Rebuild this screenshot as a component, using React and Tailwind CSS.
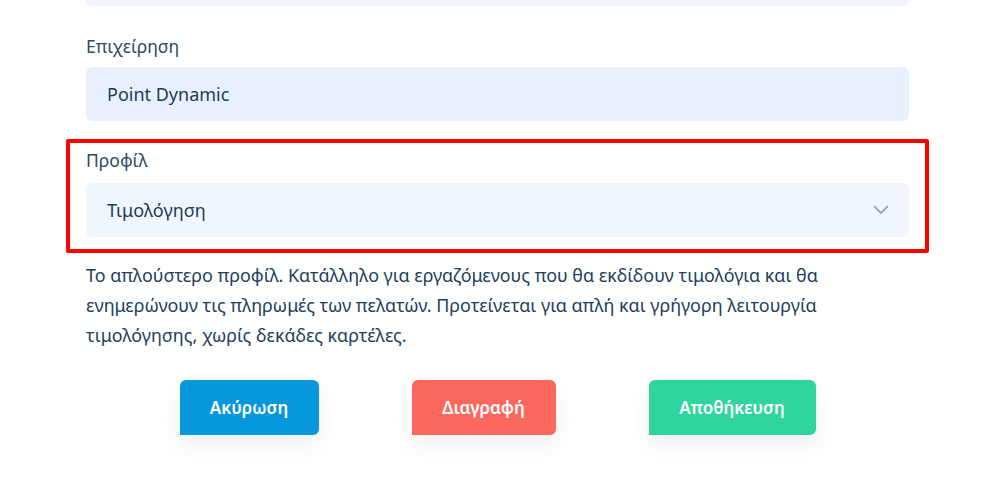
import React from 'react';

const font = { fontFamily: '"Noto Sans", "Open Sans", sans-serif' };

function Chevron() {
  return (
    <svg width="16" height="10" viewBox="0 0 16 10" fill="none" className="text-[#8b95a1]">
      <polyline points="1.5,1.5 8,8 14.5,1.5" stroke="currentColor" strokeWidth="1.6" strokeLinecap="round" strokeLinejoin="round" />
    </svg>
  );
}

export default function App() {
  return (
    <div className="w-[982px] h-[491px] overflow-hidden bg-white" style={font}>
      <div className="pl-[86px] pr-[73px]">
        {/* previous field, cut off at the top */}
        <div className="-mt-[48px] h-[54px] rounded-md bg-[#f0f5fd]" />

        {/* Επιχείρηση */}
        <div className="mt-[28px] text-[17.5px] leading-[24px] text-[#2c4a62]">Επιχείρηση</div>
        <div className="mt-[9px] h-[54px] rounded-md bg-[#e8f0fe] flex items-center px-[21px] text-[18px] text-[#1f3a58]">
          Point Dynamic
        </div>

        {/* Προφίλ */}
        <div className="relative mt-[27px]">
          <div className="text-[17.5px] leading-[24px] text-[#2c4a62]">Προφίλ</div>
          <div className="mt-[11px] h-[54px] rounded-md bg-[#f0f6fe] flex items-center justify-between pl-[21px] pr-[20px] text-[18px] text-[#1f3a58]">
            <span>Τιμολόγηση</span>
            <Chevron />
          </div>
          <div className="absolute -top-[9px] -left-[20px] -right-[20px] -bottom-[16px] border-[4px] border-[#ff0000] rounded-[2px] pointer-events-none" />
        </div>

        <p className="mt-[23px] text-[17.9px] leading-[30px] text-[#20405e]">
          Το απλούστερο προφίλ. Κατάλληλο για εργαζόμενους που θα εκδίδουν τιμολόγια και θα ενημερώνουν τις πληρωμές των πελατών. Προτείνεται για απλή και γρήγορη λειτουργία τιμολόγησης, χωρίς δεκάδες καρτέλες.
        </p>

        <div className="mt-[30px] flex justify-center gap-[93px]">
          <button className="w-[139px] h-[55px] rounded-[6px] rounded-bl-none bg-[#0797dc] text-white text-[17px] font-semibold shadow-[0_10px_20px_rgba(30,60,110,0.08)]">
            Ακύρωση
          </button>
          <button className="w-[144px] h-[55px] rounded-[6px] rounded-bl-none bg-[#fc675e] text-white text-[17px] font-semibold shadow-[0_10px_20px_rgba(30,60,110,0.08)]">
            Διαγραφή
          </button>
          <button className="w-[167px] h-[55px] rounded-[6px] rounded-bl-none bg-[#2fd49e] text-white text-[17px] font-semibold shadow-[0_10px_20px_rgba(30,60,110,0.08)]">
            Αποθήκευση
          </button>
        </div>
      </div>
    </div>
  );
}
